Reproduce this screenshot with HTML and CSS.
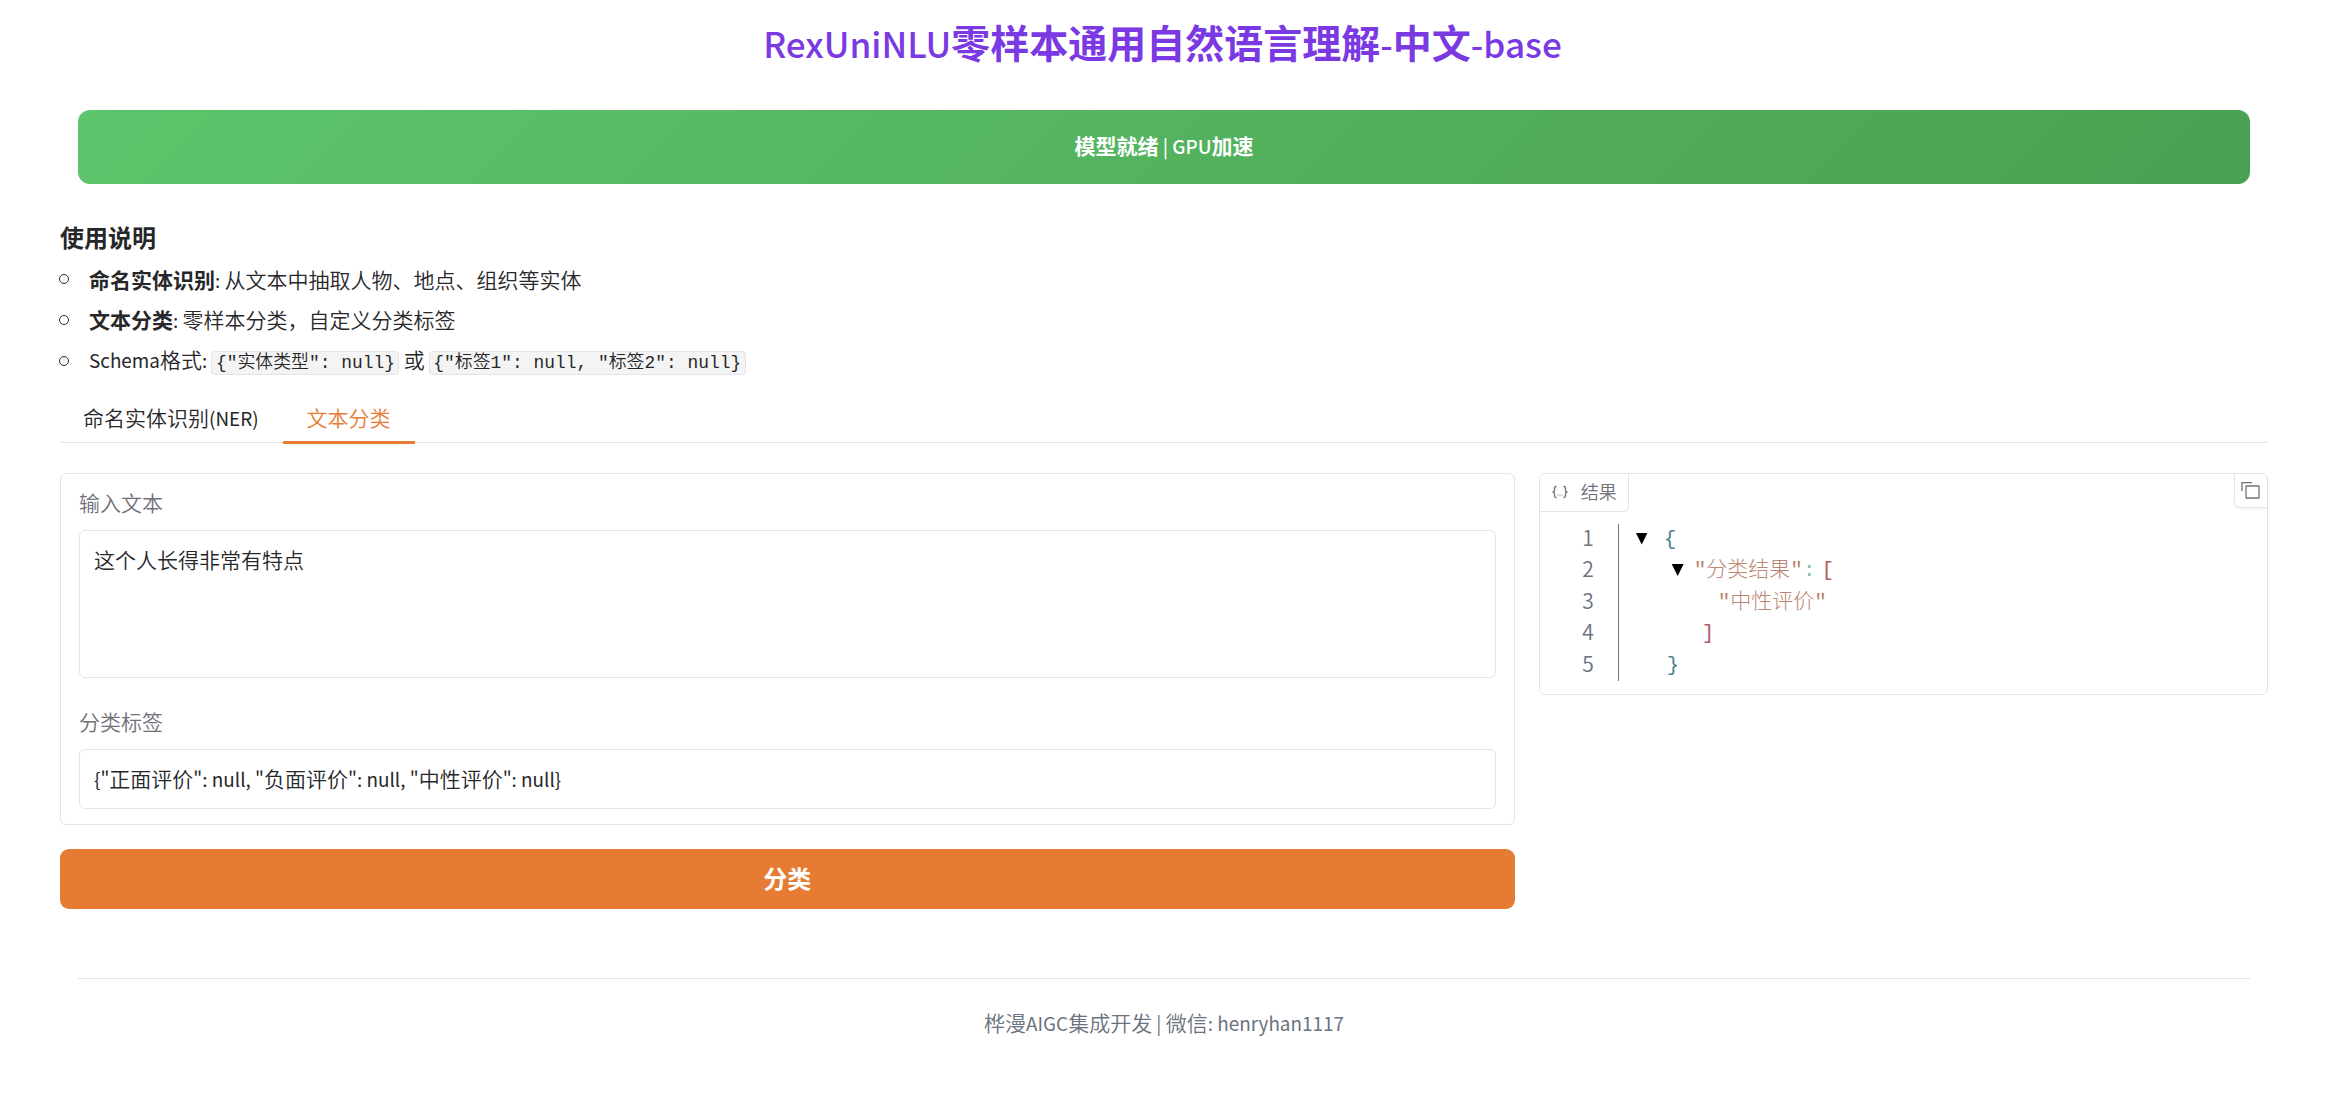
FILE: index.html
```html
<!DOCTYPE html>
<html lang="zh-CN">
<head>
    <meta charset="UTF-8">
    <title>RexUniNLU零样本通用自然语言理解-中文-base</title>
    <link rel="stylesheet" href="styles.css">
</head>
<body>
    <h1 class="title"><span class="en">RexUniNLU</span>零样本通用自然语言理解<span class="en">-</span>中文<span class="en">-base</span></h1>
    <div class="status">模型就绪<span class="en"> | GPU</span>加速</div>

    <main class="app">
        <h3 class="guide-title">使用说明</h3>
        <ul class="guide">
            <li><span><b>命名实体识别</b><span class="en">: </span>从文本中抽取人物、地点、组织等实体</span></li>
            <li><span><b>文本分类</b><span class="en">: </span>零样本分类，自定义分类标签</span></li>
            <li><span><span class="en">Schema</span>格式<span class="en">: </span><code>{"实体类型": null}</code><span class="en"> </span>或<span class="en"> </span><code>{"标签1": null, "标签2": null}</code></span></li>
        </ul>

        <nav class="tabs">
            <button class="tab">命名实体识别<span class="en">(NER)</span></button>
            <button class="tab selected">文本分类</button>
        </nav>

        <div class="row">
            <div class="col-input">
                <div class="form">
                    <div class="label">输入文本</div>
                    <div class="box textarea">这个人长得非常有特点</div>
                    <div class="label">分类标签</div>
                    <div class="box"><span class="en">{"</span>正面评价<span class="en">": null, "</span>负面评价<span class="en">": null, "</span>中性评价<span class="en">": null}</span></div>
                </div>
                <button class="submit">分类</button>
            </div>

            <div class="result">
                <div class="result-head">
                    <div class="result-label">
                        <svg width="18" height="18" viewBox="0 0 18 18" fill="none" stroke="currentColor" stroke-width="1.3">
                            <path d="M5.5 3.5H5Q3.5 3.5 3.5 5V7.2Q3.5 9 1.5 9Q3.5 9 3.5 10.8V13Q3.5 14.5 5 14.5H5.5M12.5 3.5H13Q14.5 3.5 14.5 5V7.2Q14.5 9 16.5 9Q14.5 9 14.5 10.8V13Q14.5 14.5 13 14.5H12.5"/>
                            <path d="M6.3 12H7.3M8.5 12H9.5M10.7 12H11.7" stroke-opacity=".6"/>
                        </svg>
                        结果
                    </div>
                    <button class="copy">
                        <svg width="20" height="20" viewBox="0 0 20 20" fill="none" stroke="currentColor" stroke-width="1.3">
                            <rect x="5" y="6" width="13" height="12" rx=".6"/>
                            <path d="M1 11V2.6H11"/>
                        </svg>
                    </button>
                </div>
                <div class="json">
                    <div class="line"><span class="num">1</span><span class="code"><i class="arrow"></i><span class="brace">{</span></span></div>
                    <div class="line"><span class="num">2</span><span class="code in1"><i class="arrow"></i><span class="str">"分类结果"</span><span class="colon">:</span><span class="bracket">[</span></span></div>
                    <div class="line"><span class="num">3</span><span class="code in2"><span class="str">"中性评价"</span></span></div>
                    <div class="line"><span class="num">4</span><span class="code in3"><span class="bracket">]</span></span></div>
                    <div class="line"><span class="num">5</span><span class="code in4"><span class="brace">}</span></span></div>
                </div>
            </div>
        </div>
    </main>

    <footer class="footer">桦漫<span class="en">AIGC</span>集成开发<span class="en"> | </span>微信<span class="en">: henryhan1117</span></footer>
</body>
</html>
```
FILE: styles.css
```css
* {
    box-sizing: border-box;
}
body {
    margin: 0;
    background: #fff;
    color: #27272a;
    font-family: "Noto Sans CJK SC", sans-serif;
    font-size: 21px;
    font-weight: 350;
    line-height: 31.5px;
}
button {
    font: inherit;
    border: none;
    background: none;
    padding: 0;
}
/* latin runs are drawn a bit smaller than the han glyphs */
.en {
    font-size: .9em;
    font-weight: 400;
    white-space: pre;
}
.title {
    margin: 0;
    padding-top: 11px;
    height: 110px;
    color: #7b39e4;
    font-size: 39px;
    font-weight: 700;
    line-height: 60px;
    text-align: center;
}
.title .en,
.status .en {
    font-weight: 500;
}
.status {
    margin: 0 75px 0 78px;
    height: 74px;
    line-height: 71px;
    border-radius: 12px;
    background: linear-gradient(135deg, #5dc56b, #4aa052);
    color: #fff;
    font-weight: 700;
    text-align: center;
}
.app {
    padding: 0 57px 0 60px;
}
.guide-title {
    margin: 0;
    padding-top: 35px;
    font-size: 24px;
    font-weight: 700;
    line-height: 36px;
}
.guide {
    margin: 0;
    padding: 4px 0 0;
    list-style: none;
}
.guide li {
    display: flex;
    align-items: center;
    height: 40.5px;
}
.guide li:last-child {
    padding-top: 2px;
}
.guide li::before {
    content: "";
    width: 8px;
    height: 8px;
    margin: 0 20px 0 -1px;
    border: 1px solid #27272a;
    border-radius: 50%;
}
.guide code {
    padding: 1px 3.5px;
    border: 1px solid #e4e4e7;
    border-radius: 4px;
    background: #f4f4f5;
    font-family: "Liberation Mono", "Noto Sans CJK SC", monospace;
    font-size: 17.9px;
}
.tabs {
    display: flex;
    height: 62px;
    border-bottom: 1px solid #e4e4e7;
}
.tab {
    display: flex;
    align-items: center;
    padding: 12px 24px 0;
    height: 63px;
    color: #27272a;
}
.tab:first-child {
    padding-left: 23px;
}
.tab.selected {
    padding-top: 15px;
    border-bottom: 3px solid #e67c33;
    color: #e67c33;
}
.row {
    display: flex;
    align-items: flex-start;
    gap: 24px;
    padding-top: 30px;
}
.col-input {
    flex: 2;
}
.form {
    padding: 13px 18px 15px;
    height: 352px;
    border: 1px solid #e4e4e7;
    border-radius: 6px;
}
.label {
    height: 43px;
    color: #71717a;
}
.box {
    height: 60px;
    padding: 13px 14px;
    border: 1px solid #e4e4e7;
    border-radius: 6px;
}
.textarea {
    height: 148px;
    margin-bottom: 28px;
}
.submit {
    display: block;
    width: 100%;
    height: 60px;
    margin-top: 24px;
    padding-bottom: 2px;
    border-radius: 9px;
    background: #e67c33;
    color: #fff;
    font-size: 24px;
    font-weight: 700;
}
.result {
    flex: 1;
    height: 222px;
    border: 1px solid #e4e4e7;
    border-radius: 6px;
}
.result-head {
    display: flex;
    justify-content: space-between;
    height: 50px;
    color: #71717a;
}
.result-label {
    display: flex;
    align-items: center;
    gap: 12px;
    width: 89px;
    height: 38px;
    padding-left: 11px;
    border: solid #e4e4e7;
    border-width: 0 1px 1px 0;
    border-bottom-right-radius: 6px;
    font-size: 18px;
    white-space: nowrap;
}
.copy {
    display: flex;
    align-items: center;
    justify-content: center;
    width: 33px;
    height: 34px;
    border: solid #e4e4e7;
    border-width: 0 0 1px 1px;
    border-bottom-left-radius: 6px;
    box-shadow: 0 1px 3px rgba(0, 0, 0, .06);
    color: #71717a;
}
.json {
    font-family: "Liberation Mono", "Noto Sans CJK SC", monospace;
}
.line {
    display: flex;
    height: 31.5px;
}
.num {
    width: 79px;
    padding-right: 24px;
    border-right: 1px solid #71717a;
    color: #6b7280;
    font-family: "Noto Sans CJK SC", sans-serif;
    line-height: 27px;
    text-align: right;
}
.code {
    display: flex;
    padding-left: 17px;
    font-weight: 300;
    white-space: pre;
}
.arrow {
    width: 12px;
    height: 12px;
    margin: 9px 16px 0 0;
    background: #000;
    clip-path: polygon(0 0, 100% 0, 50% 100%);
}
.in1 { padding-left: 53px; }
.in1 .arrow { margin-right: 10px; }
.in2 { padding-left: 99px; }
.in3 { padding-left: 83px; }
.in4 { padding-left: 48px; }
.brace { color: #4f8190; }
.str { color: #b98672; }
.colon { color: #8bb9b5; }
.bracket { color: #b35b66; }
.colon + .bracket { margin-left: 6px; }
.footer {
    margin: 69px 75px 0 78px;
    padding-top: 28px;
    border-top: 1px solid #e4e4e7;
    color: #6b7280;
    text-align: center;
}
```
